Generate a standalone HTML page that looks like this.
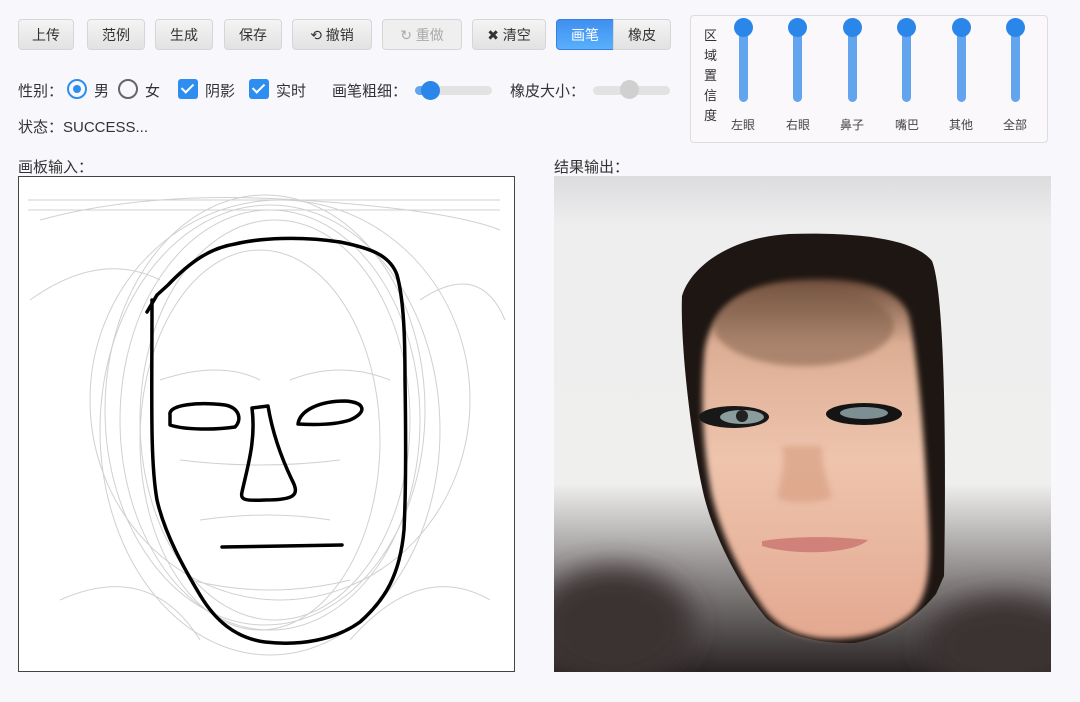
<!DOCTYPE html>
<html><head><meta charset="utf-8"><style>
html,body{margin:0;width:1080px;height:702px;overflow:hidden}
body{background:#f8f7fb;font-family:"Liberation Sans","Noto Sans CJK SC",sans-serif;color:#333;position:relative}
.b{position:absolute;top:19px;height:31px;border:1px solid #d6d6d6;border-radius:4px;background:linear-gradient(#f4f4f4,#e2e2e2);font-size:14px;line-height:31px;text-align:center;color:#333;box-sizing:border-box}
.t{position:absolute;font-size:15px;white-space:nowrap}
.cb{position:absolute;top:79px;width:20px;height:20px;background:#2d8ef0;border-radius:3px}
.cb:after{content:"";position:absolute;left:6px;top:2px;width:5px;height:10px;border:solid #fff;border-width:0 2px 2px 0;transform:rotate(45deg)}
.vs{position:absolute;top:20px;width:9px;height:82px;background:#62a4ee;border-radius:5px}
.vs:before{content:"";position:absolute;left:-5px;top:-2px;width:19px;height:19px;border-radius:50%;background:#2b86ea}
.vl{position:absolute;top:116px;font-size:12px;color:#444;width:40px;text-align:center}
</style></head><body>
<div class="b" style="left:18px;width:56px">上传</div>
<div class="b" style="left:87px;width:58px">范例</div>
<div class="b" style="left:155px;width:58px">生成</div>
<div class="b" style="left:224px;width:58px">保存</div>
<div class="b" style="left:292px;width:80px">⟲ 撤销</div>
<div class="b" style="left:382px;width:80px;color:#aaa;background:#efefef">↻ 重做</div>
<div class="b" style="left:472px;width:74px">✖ 清空</div>
<div class="b" style="left:556px;width:58px;background:linear-gradient(#3f8ff0,#59b0fb);color:#fff;border-color:#3a7ee0;border-radius:4px 0 0 4px">画笔</div>
<div class="b" style="left:613px;width:58px;border-radius:0 4px 4px 0">橡皮</div>

<div class="t" style="left:18px;top:80px">性别：</div>
<div style="position:absolute;left:67px;top:79px;width:16px;height:16px;border:2px solid #2d8ef0;border-radius:50%"></div>
<div style="position:absolute;left:73px;top:85px;width:8px;height:8px;background:#2d8ef0;border-radius:50%"></div>
<div class="t" style="left:94px;top:80px">男</div>
<div style="position:absolute;left:118px;top:79px;width:16px;height:16px;border:2px solid #666;border-radius:50%"></div>
<div class="t" style="left:145px;top:80px">女</div>
<div class="cb" style="left:178px"></div><div class="t" style="left:205px;top:80px">阴影</div>
<div class="cb" style="left:249px"></div><div class="t" style="left:276px;top:80px">实时</div>
<div class="t" style="left:332px;top:80px">画笔粗细：</div>
<div style="position:absolute;left:415px;top:86px;width:77px;height:9px;background:#e2e2e2;border-radius:5px"></div>
<div style="position:absolute;left:415px;top:86px;width:16px;height:9px;background:#62a4ee;border-radius:5px"></div>
<div style="position:absolute;left:421px;top:81px;width:19px;height:19px;background:#2b86ea;border-radius:50%"></div>
<div class="t" style="left:510px;top:80px">橡皮大小：</div>
<div style="position:absolute;left:593px;top:86px;width:77px;height:9px;background:#e2e2e2;border-radius:5px"></div>
<div style="position:absolute;left:620px;top:80px;width:19px;height:19px;background:#d0d0d0;border-radius:50%"></div>
<div class="t" style="left:18px;top:116px">状态：SUCCESS...</div>

<div style="position:absolute;left:690px;top:15px;width:356px;height:126px;border:1px solid #ddd;border-radius:4px;background:#faf8fa"></div>
<div style="position:absolute;left:704px;top:26px;font-size:13px;line-height:20px;width:14px;color:#333">区域置信度</div>
<div class="vs" style="left:739px"></div><div class="vl" style="left:723px">左眼</div>
<div class="vs" style="left:793px"></div><div class="vl" style="left:778px">右眼</div>
<div class="vs" style="left:848px"></div><div class="vl" style="left:832px">鼻子</div>
<div class="vs" style="left:902px"></div><div class="vl" style="left:887px">嘴巴</div>
<div class="vs" style="left:957px"></div><div class="vl" style="left:941px">其他</div>
<div class="vs" style="left:1011px"></div><div class="vl" style="left:995px">全部</div>

<div class="t" style="left:18px;top:156px">画板输入：</div>
<div class="t" style="left:554px;top:156px">结果输出：</div>

<svg style="position:absolute;left:18px;top:176px" width="497" height="496" viewBox="18 176 497 496">
<rect x="18.5" y="176.5" width="496" height="495" fill="#fff" stroke="#444"/>
<g fill="none" stroke="#d0d0d0" stroke-width="1">
<ellipse cx="270" cy="420" rx="150" ry="210"/><ellipse cx="270" cy="430" rx="170" ry="225"/>
<ellipse cx="280" cy="400" rx="190" ry="200"/><ellipse cx="260" cy="440" rx="120" ry="190"/>
<ellipse cx="275" cy="420" rx="135" ry="200"/><ellipse cx="265" cy="410" rx="160" ry="215"/>
<path d="M40 220 Q150 190 300 200 T500 230"/><path d="M30 300 Q100 250 160 280"/><path d="M420 300 Q480 260 505 320"/>
<path d="M60 600 Q150 560 200 640"/><path d="M350 640 Q420 560 490 600"/>
<path d="M28 200 H500 M28 210 H500"/>
<path d="M160 380 Q220 360 260 380 M290 380 Q340 360 390 380 M180 460 Q260 470 340 460 M200 520 Q270 510 330 520 M190 580 Q270 600 350 580"/>
</g>
<g fill="none" stroke="#000" stroke-width="3.5" stroke-linecap="round" stroke-linejoin="round">
<path d="M147 312 L157 295 L168 285 C190 262 210 248 235 244 C260 238 300 236 340 242 C370 248 390 255 397 275 C404 300 405 340 405 380 C406 440 406 490 404 530 C400 575 385 600 360 622 C335 640 300 646 265 642 C235 638 215 620 200 595 C185 570 165 535 157 500 C150 460 152 400 152 300"/>
<path d="M170 415 C168 404 200 402 225 405 C240 408 242 420 235 427 C215 430 185 430 170 425 Z"/>
<path d="M298 424 C300 410 320 401 345 401 C365 402 368 412 350 420 C335 425 315 425 298 424 Z"/>
<path d="M252 408 L268 406 C272 430 280 455 292 480 C300 495 295 500 265 500 C245 501 240 500 242 492 C248 465 256 440 252 408"/>
<path d="M222 547 C260 546 300 546 342 545"/>
</g>
</svg>

<svg style="position:absolute;left:554px;top:176px" width="497" height="496" viewBox="0 0 497 496">
<defs>
<linearGradient id="bg" x1="0" y1="0" x2="0" y2="1"><stop offset="0" stop-color="#dcdbdd"/><stop offset=".1" stop-color="#eeeeef"/><stop offset=".62" stop-color="#efefee"/><stop offset=".78" stop-color="#9a9696"/><stop offset="1" stop-color="#2a2424"/></linearGradient>
<linearGradient id="sk" x1="0" y1="0" x2="0" y2="1"><stop offset="0" stop-color="#6a4a38"/><stop offset=".18" stop-color="#dcae94"/><stop offset=".5" stop-color="#eec4ad"/><stop offset="1" stop-color="#e3a890"/></linearGradient>
<filter id="bl" x="-50%" y="-50%" width="200%" height="200%"><feGaussianBlur stdDeviation="14"/></filter>
<filter id="b2" x="-20%" y="-20%" width="140%" height="140%"><feGaussianBlur stdDeviation="3"/></filter>
</defs>
<rect width="497" height="496" fill="url(#bg)"/>
<ellipse cx="60" cy="450" rx="80" ry="60" fill="#3a3030" filter="url(#bl)"/>
<ellipse cx="450" cy="470" rx="80" ry="50" fill="#3a3232" filter="url(#bl)"/>
<path d="M128 120 C135 95 170 62 235 58 C300 56 360 62 378 85 C392 120 392 300 390 400 L382 418 C360 445 330 462 300 467 C260 468 230 458 213 443 C185 410 160 360 150 320 C138 270 126 170 128 120 Z" fill="#1e1612"/>
<path d="M150 180 C155 130 190 108 240 104 C300 100 345 110 355 140 C365 190 372 280 375 360 C376 400 372 420 360 435 C335 458 300 465 265 462 C235 458 218 446 205 425 C185 395 168 360 158 320 C150 280 146 230 150 180 Z" fill="url(#sk)" filter="url(#b2)"/>
<ellipse cx="250" cy="150" rx="90" ry="40" fill="#7a5a45" opacity=".5" filter="url(#b2)"/>
<ellipse cx="180" cy="241" rx="35" ry="11" fill="#181818"/>
<ellipse cx="188" cy="241" rx="22" ry="7" fill="#8a9c9c"/>
<circle cx="188" cy="240" r="6" fill="#222"/>
<ellipse cx="310" cy="238" rx="38" ry="11" fill="#141414"/>
<ellipse cx="310" cy="237" rx="24" ry="6" fill="#7e8f94"/>
<path d="M228 270 C232 295 225 305 223 322 C235 328 260 328 278 322 C272 300 268 290 268 270" fill="#d9a184" opacity=".7" filter="url(#b2)"/>
<path d="M208 365 C240 360 280 360 314 364 C300 378 240 380 208 370 Z" fill="#d0827a"/>
</svg>
</body></html>
